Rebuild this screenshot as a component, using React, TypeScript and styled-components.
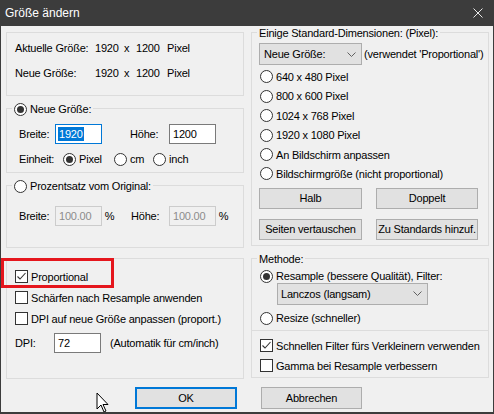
import React from 'react';
import styled, { createGlobalStyle } from 'styled-components';

const Global = createGlobalStyle`
  html, body { margin: 0; padding: 0; background: #f0f0f0; }
  body {
    font-family: "Liberation Sans", Arial, sans-serif;
    font-size: 11px;
    letter-spacing: -0.2px;
    color: #000;
  }
  #root { width: 494px; height: 414px; }
`;

const Window = styled.div`
  position: relative;
  width: 494px;
  height: 414px;
  box-sizing: border-box;
  border-left: 1px solid #3c3c3c;
  border-right: 1px solid #3c3c3c;
  border-bottom: 2px solid #3c3c3c;
  background: #f0f0f0;
  display: flex;
  flex-direction: column;
  overflow: hidden;
`;

const TitleBar = styled.div`
  height: 26px;
  flex: none;
  background: #3c3c3c;
  color: #fff;
  display: flex;
  align-items: center;
  justify-content: space-between;
  padding: 0 10px 0 4px;
  font-size: 12px;
  letter-spacing: 0;
`;

const Body = styled.div`
  display: grid;
  grid-template-columns: 238px 238px;
  column-gap: 7px;
  padding-left: 5px;
  align-items: start;
`;

const Column = styled.div`
  display: flex;
  flex-direction: column;
`;

const Group = styled.div<{ $top: number; $h: number }>`
  box-sizing: border-box;
  border: 1px solid #dcdcdc;
  margin-top: ${(p) => p.$top}px;
  height: ${(p) => p.$h}px;
  display: flex;
  flex-direction: column;
`;

const Caption = styled.div`
  align-self: flex-start;
  display: flex;
  align-items: center;
  height: 14px;
  margin: -7px 0 0 5px;
  padding: 0 2px;
  background: #f0f0f0;
  white-space: nowrap;
`;

const InfoGrid = styled.div`
  display: grid;
  grid-template-columns: 80px 29px 12px 31px auto;
  row-gap: 10px;
  padding: 7.5px 0 0 8px;
  line-height: 15px;
  white-space: nowrap;
`;

const FieldRow = styled.div<{ $cols: string; $top: number; $pad?: number }>`
  display: grid;
  grid-template-columns: ${(p) => p.$cols};
  align-items: center;
  height: 20px;
  margin-top: ${(p) => p.$top}px;
  padding-left: ${(p) => p.$pad ?? 12}px;
  white-space: nowrap;
`;

const Field = styled.div<{ $focus?: boolean; $disabled?: boolean }>`
  width: 47px;
  height: 20px;
  box-sizing: border-box;
  border: 1px solid ${(p) => (p.$focus ? '#0078d7' : p.$disabled ? '#cccccc' : '#7a7a7a')};
  background: ${(p) => (p.$disabled ? '#f0f0f0' : '#fff')};
  color: ${(p) => (p.$disabled ? '#8c8c8c' : '#000')};
  display: flex;
  align-items: center;
  padding-left: 3px;
`;

const Selected = styled.span`
  background: #0078d7;
  color: #fff;
  line-height: 14px;
  padding: 0 1px;
  margin-left: -1px;
`;

const Option = styled.div<{ $h?: number; $w?: number }>`
  display: flex;
  align-items: center;
  gap: 3px;
  height: ${(p) => p.$h ?? 15}px;
  ${(p) => (p.$w ? `width: ${p.$w}px;` : '')}
  white-space: nowrap;
  flex: none;
`;

const Radio = styled.span<{ $on?: boolean }>`
  width: 13px;
  height: 13px;
  box-sizing: border-box;
  border-radius: 50%;
  border: 1px solid #333;
  background: #fff;
  flex: none;
  display: inline-flex;
  align-items: center;
  justify-content: center;
  &::after {
    content: '';
    width: 7px;
    height: 7px;
    border-radius: 50%;
    background: #333;
    display: ${(p) => (p.$on ? 'block' : 'none')};
  }
`;

const Box = styled.span`
  width: 13px;
  height: 13px;
  box-sizing: border-box;
  border: 1px solid #333;
  background: #fff;
  flex: none;
  display: inline-flex;
  align-items: center;
  justify-content: center;
`;

const UnitRow = styled.div`
  display: flex;
  align-items: center;
  height: 15px;
  margin-top: 7.5px;
  padding-left: 12px;
`;

const UnitLabel = styled.span`
  width: 44px;
  flex: none;
`;

const CheckList = styled.div<{ $top: number; $pad: number; $h: number }>`
  display: flex;
  flex-direction: column;
  margin-top: ${(p) => p.$top}px;
  padding-left: ${(p) => p.$pad}px;
  & > * {
    height: ${(p) => p.$h}px;
  }
`;

const SelectRow = styled.div`
  display: flex;
  align-items: center;
  gap: 2px;
  margin-top: 3px;
  padding-left: 7px;
  white-space: nowrap;
`;

const Select = styled.div<{ $w: number; $h: number; $pl: number }>`
  width: ${(p) => p.$w}px;
  height: ${(p) => p.$h}px;
  box-sizing: border-box;
  border: 1px solid #adadad;
  background: #e1e1e1;
  display: flex;
  align-items: center;
  justify-content: space-between;
  padding: 0 5px 0 ${(p) => p.$pl}px;
  flex: none;
`;

const ButtonGrid = styled.div`
  display: grid;
  grid-template-columns: 103px 102px;
  column-gap: 14px;
  row-gap: 10px;
  padding-left: 7px;
  margin-top: 4.3px;
`;

const Button = styled.button<{ $w?: number; $h?: number; $default?: boolean }>`
  font: inherit;
  letter-spacing: inherit;
  color: #000;
  width: ${(p) => (p.$w ? `${p.$w}px` : 'auto')};
  height: ${(p) => p.$h ?? 21}px;
  box-sizing: border-box;
  border: 1px solid ${(p) => (p.$default ? '#0078d7' : '#adadad')};
  box-shadow: ${(p) => (p.$default ? 'inset 0 0 0 1px #0078d7' : 'none')};
  background: #e1e1e1;
  padding: 0;
  white-space: nowrap;
`;

const Indented = styled.div<{ $top: number; $pad: number }>`
  margin-top: ${(p) => p.$top}px;
  padding-left: ${(p) => p.$pad}px;
`;

const Separator = styled.div`
  height: 1px;
  background: #dcdcdc;
  margin-top: 4px;
`;

const Note = styled.span`
  padding-left: 9px;
`;

const Footer = styled.div`
  display: flex;
  gap: 24px;
  padding-left: 134px;
  margin-top: 8px;
`;

const Highlight = styled.div`
  position: absolute;
  left: 0;
  top: 258px;
  width: 113px;
  height: 30px;
  box-sizing: border-box;
  border: 3px solid #e5161d;
  pointer-events: none;
`;

const Cursor = styled.svg`
  position: absolute;
  left: 95px;
  top: 392px;
`;

const Chevron = () => (
  <svg width="9" height="5" viewBox="0 0 9 5">
    <polyline points="0.5,0.5 4.5,4.5 8.5,0.5" fill="none" stroke="#606060" strokeWidth="1" />
  </svg>
);

const Check = ({ on }: { on?: boolean }) => (
  <Box>
    {on && (
      <svg width="11" height="11" viewBox="0 0 11 11">
        <polyline points="1.5,5.5 4,8 9.5,2" fill="none" stroke="#333" strokeWidth="1.1" />
      </svg>
    )}
  </Box>
);

export default function App() {
  return (
    <>
      <Global />
      <Window>
        <TitleBar>
          <span>Größe ändern</span>
          <svg width="10" height="10" viewBox="0 0 10 10">
            <path d="M0.5 0.5 L9.5 9.5 M9.5 0.5 L0.5 9.5" stroke="#e8e8e8" strokeWidth="1" />
          </svg>
        </TitleBar>
        <Body>
          <Column>
            <Group $top={6} $h={64}>
              <InfoGrid>
                <span>Aktuelle Größe:</span>
                <span>1920</span>
                <span>x</span>
                <span>1200</span>
                <span>Pixel</span>
                <span>Neue Größe:</span>
                <span>1920</span>
                <span>x</span>
                <span>1200</span>
                <span>Pixel</span>
              </InfoGrid>
            </Group>

            <Group $top={12} $h={65}>
              <Caption>
                <Option>
                  <Radio $on />
                  <span>Neue Größe:</span>
                </Option>
              </Caption>
              <FieldRow $cols="36px 47px 28px 39px 47px" $top={8}>
                <span>Breite:</span>
                <Field $focus>
                  <Selected>1920</Selected>
                </Field>
                <span />
                <span>Höhe:</span>
                <Field>1200</Field>
              </FieldRow>
              <UnitRow>
                <UnitLabel>Einheit:</UnitLabel>
                <Option $w={51}>
                  <Radio $on />
                  <span>Pixel</span>
                </Option>
                <Option $w={39}>
                  <Radio />
                  <span>cm</span>
                </Option>
                <Option>
                  <Radio />
                  <span>inch</span>
                </Option>
              </UnitRow>
            </Group>

            <Group $top={12} $h={63}>
              <Caption>
                <Option>
                  <Radio />
                  <span>Prozentsatz vom Original:</span>
                </Option>
              </Caption>
              <FieldRow $cols="36px 47px 29px 38px 47px auto" $top={13}>
                <span>Breite:</span>
                <Field $disabled>100.00</Field>
                <span>&nbsp;%</span>
                <span>Höhe:</span>
                <Field $disabled>100.00</Field>
                <span>&nbsp;%</span>
              </FieldRow>
            </Group>

            <Group $top={10} $h={121}>
              <CheckList $top={7} $pad={8} $h={21}>
                <Option>
                  <Check on />
                  <span>Proportional</span>
                </Option>
                <Option>
                  <Check />
                  <span>Schärfen nach Resample anwenden</span>
                </Option>
                <Option>
                  <Check />
                  <span>DPI auf neue Größe anpassen (proport.)</span>
                </Option>
              </CheckList>
              <FieldRow $cols="39px 47px auto" $top={4} $pad={8}>
                <span>DPI:</span>
                <Field>72</Field>
                <Note>(Automatik für cm/inch)</Note>
              </FieldRow>
            </Group>
          </Column>

          <Column>
            <Group $top={6} $h={214}>
              <Caption>Einige Standard-Dimensionen: (Pixel):</Caption>
              <SelectRow>
                <Select $w={103} $h={22} $pl={4}>
                  <span>Neue Größe:</span>
                  <Chevron />
                </Select>
                <span>(verwendet 'Proportional')</span>
              </SelectRow>
              <CheckList $top={2.3} $pad={8} $h={19.4}>
                <Option>
                  <Radio />
                  <span>640 x 480 Pixel</span>
                </Option>
                <Option>
                  <Radio />
                  <span>800 x 600 Pixel</span>
                </Option>
                <Option>
                  <Radio />
                  <span>1024 x 768 Pixel</span>
                </Option>
                <Option>
                  <Radio />
                  <span>1920 x 1080 Pixel</span>
                </Option>
                <Option>
                  <Radio />
                  <span>An Bildschirm anpassen</span>
                </Option>
                <Option>
                  <Radio />
                  <span>Bildschirmgröße (nicht proportional)</span>
                </Option>
              </CheckList>
              <ButtonGrid>
                <Button>Halb</Button>
                <Button>Doppelt</Button>
                <Button>Seiten vertauschen</Button>
                <Button>Zu Standards hinzuf.</Button>
              </ButtonGrid>
            </Group>

            <Group $top={12} $h={120}>
              <Caption>Methode:</Caption>
              <CheckList $top={3.5} $pad={8} $h={13}>
                <Option $h={13}>
                  <Radio $on />
                  <span>Resample (bessere Qualität), Filter:</span>
                </Option>
              </CheckList>
              <Indented $top={0} $pad={25}>
                <Select $w={151} $h={22} $pl={3}>
                  <span>Lanczos (langsam)</span>
                  <Chevron />
                </Select>
              </Indented>
              <CheckList $top={6} $pad={8} $h={15}>
                <Option>
                  <Radio />
                  <span>Resize (schneller)</span>
                </Option>
              </CheckList>
              <Separator />
              <CheckList $top={5} $pad={8} $h={20}>
                <Option>
                  <Check on />
                  <span>Schnellen Filter fürs Verkleinern verwenden</span>
                </Option>
                <Option>
                  <Check />
                  <span>Gamma bei Resample verbessern</span>
                </Option>
              </CheckList>
            </Group>
          </Column>
        </Body>
        <Footer>
          <Button $w={102} $h={22} $default>
            OK
          </Button>
          <Button $w={101} $h={22}>
            Abbrechen
          </Button>
        </Footer>
        <Highlight />
        <Cursor width="13" height="21" viewBox="0 0 13 21">
          <path
            d="M1 1 L1 17 L5 13 L8 20 L10 19 L7 12.5 L12 12.5 Z"
            fill="#fff"
            stroke="#000"
            strokeWidth="1"
            strokeLinejoin="miter"
          />
        </Cursor>
      </Window>
    </>
  );
}
